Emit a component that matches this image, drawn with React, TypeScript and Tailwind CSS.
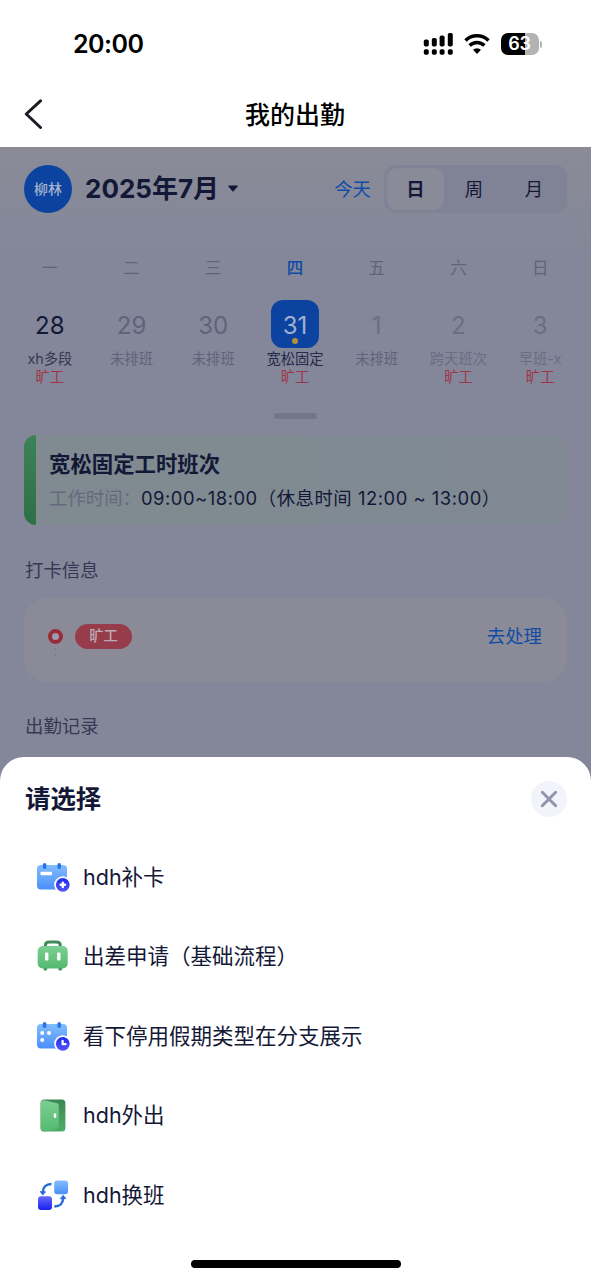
import React, { useState } from 'react';

interface DayItem {
  week: string;
  day: string;
  shift: string;
  absent?: boolean;
  dayClass: string;
  shiftClass: string;
}

const days: DayItem[] = [
  { week: '一', day: '28', shift: 'xh多段', absent: true, dayClass: 'text-[#141837]', shiftClass: 'text-[#353955]' },
  { week: '二', day: '29', shift: '未排班', dayClass: 'text-[#60637b]', shiftClass: 'text-[#60637b]' },
  { week: '三', day: '30', shift: '未排班', dayClass: 'text-[#60637b]', shiftClass: 'text-[#60637b]' },
  { week: '四', day: '31', shift: '宽松固定', absent: true, dayClass: 'text-[#a3b0cf]', shiftClass: 'text-[#24294a]' },
  { week: '五', day: '1', shift: '未排班', dayClass: 'text-[#6a6d84]', shiftClass: 'text-[#60637b]' },
  { week: '六', day: '2', shift: '跨天班次', absent: true, dayClass: 'text-[#6a6d84]', shiftClass: 'text-[#6a6d84]' },
  { week: '日', day: '3', shift: '早班-x', absent: true, dayClass: 'text-[#6a6d84]', shiftClass: 'text-[#6a6d84]' },
];

const CardIcon = () => (
  <svg width="38" height="38" viewBox="0 0 38 38" fill="none">
    <defs>
      <linearGradient id="calBody" x1="0" y1="0" x2="0" y2="1">
        <stop stopColor="#82bdfd" />
        <stop offset="1" stopColor="#4a8ffb" />
      </linearGradient>
      <linearGradient id="calBadge" x1="0" y1="0" x2="0" y2="1">
        <stop stopColor="#1a2bf0" />
        <stop offset="1" stopColor="#5656f6" />
      </linearGradient>
    </defs>
    <rect x="3" y="7" width="30" height="24.5" rx="4" fill="url(#calBody)" />
    <rect x="8.8" y="5" width="3.6" height="6" rx="1.8" fill="#2674e8" />
    <rect x="23.4" y="5" width="3.6" height="6" rx="1.8" fill="#2674e8" />
    <rect x="6.5" y="13.8" width="11.5" height="3.4" rx="1" fill="#fff" />
    <circle cx="28.8" cy="26.8" r="8.6" fill="#fff" />
    <circle cx="28.8" cy="26.8" r="6.9" fill="url(#calBadge)" />
    <path d="M28.8 24.6v4.4M26.6 26.8h4.4" stroke="#fff" strokeWidth="2.4" strokeLinecap="round" />
  </svg>
);

const TripIcon = () => (
  <svg width="38" height="38" viewBox="0 0 38 38" fill="none">
    <defs>
      <linearGradient id="bagBody" x1="0" y1="0" x2="0" y2="1">
        <stop stopColor="#7bd092" />
        <stop offset="1" stopColor="#55b970" />
      </linearGradient>
    </defs>
    <path d="M11.3 10V8.5c0-2.2 1.7-3.6 4-3.6h7c2.3 0 4 1.4 4 3.6V10" stroke="#418a5b" strokeWidth="3" />
    <rect x="9.6" y="28" width="3.6" height="5.4" rx="1.5" fill="#418a5b" />
    <rect x="24.4" y="28" width="3.6" height="5.4" rx="1.5" fill="#418a5b" />
    <rect x="3.7" y="9" width="30" height="22.4" rx="5" fill="url(#bagBody)" />
    <rect x="11" y="15.5" width="3.4" height="8" rx="1.2" fill="#fff" />
    <rect x="23.1" y="15.5" width="3.4" height="8" rx="1.2" fill="#fff" />
  </svg>
);

const LeaveIcon = () => (
  <svg width="38" height="38" viewBox="0 0 38 38" fill="none">
    <rect x="3" y="7" width="30" height="24.5" rx="4" fill="url(#calBody)" />
    <rect x="8.8" y="5" width="3.6" height="6" rx="1.8" fill="#2674e8" />
    <rect x="23.4" y="5" width="3.6" height="6" rx="1.8" fill="#2674e8" />
    <circle cx="8.2" cy="16" r="2" fill="#fff" />
    <circle cx="15" cy="16" r="2" fill="#fff" />
    <circle cx="8.2" cy="23" r="2" fill="#fff" />
    <circle cx="28.8" cy="26.8" r="8.6" fill="#fff" />
    <circle cx="28.8" cy="26.8" r="6.9" fill="url(#calBadge)" />
    <path d="M28.6 23.8v3.4h3" stroke="#fff" strokeWidth="2.2" strokeLinecap="round" strokeLinejoin="round" />
  </svg>
);

const DoorIcon = () => (
  <svg width="38" height="38" viewBox="0 0 38 38" fill="none">
    <defs>
      <linearGradient id="doorFrame" x1="0" y1="0" x2="0" y2="1">
        <stop stopColor="#3f8557" />
        <stop offset="1" stopColor="#4dae67" />
      </linearGradient>
    </defs>
    <rect x="6.6" y="2.6" width="24.8" height="32" rx="3.5" fill="url(#doorFrame)" />
    <path
      d="M6.6 6.2c0-2 1.6-3.3 3.5-2.9l12.3 2.6c1.4.3 2.4 1.3 2.4 2.8v20.6c0 1.4-.9 2.4-2.2 2.7l-11.8 2.4c-2.3.5-4.2-1-4.2-3.2z"
      fill="url(#bagBody)"
    />
    <rect x="19.8" y="16.2" width="2.4" height="4.8" rx="1.2" fill="#fff" />
  </svg>
);

const SwapIcon = () => (
  <svg width="38" height="38" viewBox="0 0 38 38" fill="none">
    <defs>
      <linearGradient id="swapDark" x1="0" y1="0" x2="0" y2="1">
        <stop stopColor="#6868f8" />
        <stop offset="1" stopColor="#1722f2" />
      </linearGradient>
    </defs>
    <rect x="20.2" y="4.6" width="13.8" height="13.6" rx="3" fill="url(#calBody)" />
    <rect x="4" y="20.2" width="14" height="13.8" rx="3" fill="url(#swapDark)" />
    <path d="M17.5 8c-5.2 0-8.7 3-8.7 8.4" stroke="#2868da" strokeWidth="2.4" />
    <path d="M6.2 15.6l5.4.2-2.9 3.3z" fill="#2868da" stroke="#2868da" strokeWidth=".8" strokeLinejoin="round" />
    <path d="M20.3 30.5c5.4 0 8.8-3 8.8-8.2" stroke="#2868da" strokeWidth="2.4" />
    <path d="M26.3 22.7l5.6-.1-2.8-3.3z" fill="#2868da" stroke="#2868da" strokeWidth=".8" strokeLinejoin="round" />
  </svg>
);

const options = [
  { label: 'hdh补卡', icon: <CardIcon /> },
  { label: '出差申请（基础流程）', icon: <TripIcon /> },
  { label: '看下停用假期类型在分支展示', icon: <LeaveIcon /> },
  { label: 'hdh外出', icon: <DoorIcon /> },
  { label: 'hdh换班', icon: <SwapIcon /> },
];

const StatusBar = () => (
  <div className="flex h-[88px] items-center justify-between pr-[49px] pl-[73px]">
    <span className="pt-[2px] text-[25px] font-semibold tracking-[-0.5px] text-black">20:00</span>
    <div className="flex items-center">
      <svg width="31" height="24" viewBox="0 0 31 24" fill="#000">
        <rect x="0.8" y="7.5" width="5" height="7" rx="1.8" />
        <rect x="8.8" y="6" width="5" height="8.5" rx="1.8" />
        <rect x="16.6" y="3.5" width="5" height="11" rx="1.8" />
        <rect x="24.8" y="1" width="5" height="13.5" rx="1.8" />
        <rect x="0.8" y="17.2" width="5" height="5.5" rx="1.8" />
        <rect x="8.8" y="17.2" width="5" height="5.5" rx="1.8" />
        <rect x="16.6" y="17.2" width="5" height="5.5" rx="1.8" />
        <rect x="24.8" y="17.2" width="5" height="5.5" rx="1.8" />
      </svg>
      <svg className="ml-[10px]" width="26" height="22" viewBox="0 0 26 22" fill="none" stroke="#000" strokeWidth="3.5">
        <path d="M1.5 7.5a16.5 16.5 0 0 1 23 0" />
        <path d="M5.6 12.5a10.6 10.6 0 0 1 14.800 0" />
        <path d="M9 16.8a5.8 5.8 0 0 1 8 0L13 21z" fill="#000" stroke="none" />
      </svg>
      <div className="ml-[11px] flex items-center">
        <div className="flex h-[22px] w-[38px] items-center justify-center rounded-[7px] bg-linear-to-r from-black from-63% to-[#b3b3b3] to-63%">
          <span className="pr-px text-[18px] leading-none font-semibold tracking-[-0.3px] text-white">63</span>
        </div>
        <span className="ml-[1px] h-[7px] w-[2px] rounded-r-full bg-[#b3b3b3]"></span>
      </div>
    </div>
  </div>
);

const App: React.FC = () => {
  const [view, setView] = useState('日');

  return (
    <div className="relative flex h-[1280px] w-[591px] flex-col overflow-hidden bg-white font-['Inter','Noto_Sans_CJK_SC',sans-serif]">
      <StatusBar />

      <div className="grid h-[59px] grid-cols-[60px_1fr_60px] items-center">
        <button className="pb-[7px] pl-[24px]">
          <svg width="20" height="30" viewBox="0 0 20 30" fill="none">
            <path d="M16.5 1.8L2.3 15l14.2 13.5" stroke="#1a1c24" strokeWidth="3" strokeLinecap="round" strokeLinejoin="round" />
          </svg>
        </button>
        <h1 className="pr-px pb-[5px] text-center text-[25px] leading-none font-medium text-black">我的出勤</h1>
      </div>

      <div className="h-[660px] bg-linear-to-b from-[#8a8b97] to-[#838799] to-[110px]">
        <div className="flex h-[66px] items-end px-6">
          <div className="flex h-12 w-12 items-center justify-center rounded-full bg-[#0c43a0] pb-px text-[14px] font-medium text-[#a5b2cd]">
            柳林
          </div>
          <div className="ml-[13px] flex h-12 items-center">
            <span className="text-[26px] leading-none font-bold whitespace-nowrap text-[#141837]">2025年7月</span>
            <svg className="ml-[8px]" width="12" height="8" viewBox="0 0 12 8">
              <path d="M1.5 1h9L6 6.3z" fill="#141837" stroke="#141837" strokeWidth="1" strokeLinejoin="round" />
            </svg>
          </div>
          <div className="ml-auto flex h-12 items-center">
            <span className="mr-[13px] pt-px text-[18.4px] text-[#124aa6]">今天</span>
            <div className="flex h-12 w-[183px] items-center rounded-[12px] bg-[#808396] p-[3px]">
              {['日', '周', '月'].map((item) => (
                <button
                  key={item}
                  onClick={() => setView(item)}
                  className={`h-[42px] rounded-[10px] pt-px text-[18.4px] text-[#141837] ${item === '日' ? 'w-[57px]' : 'w-[60px]'} ${
                    view === item ? 'bg-[#898b99] font-bold' : ''
                  }`}
                >
                  {item}
                </button>
              ))}
            </div>
          </div>
        </div>

        <div className="grid grid-cols-7 pt-[41px] pr-[10px] pl-[9px]">
          {days.map((item) => {
            const selected = item.day === '31';
            return (
              <div key={item.day} className="flex flex-col items-center whitespace-nowrap">
                <span className={`text-[16.5px] leading-[28px] ${selected ? 'font-medium text-[#124aa6]' : 'text-[#60637b]'}`}>
                  {item.week}
                </span>
                <div
                  className={`relative mt-[18px] flex h-12 w-12 items-center justify-center rounded-[12px] pt-[3px] text-[24px] ${item.dayClass} ${
                    selected ? 'bg-[#0c43a0]' : ''
                  }`}
                >
                  {item.day}
                  {selected && <span className="absolute bottom-[4px] left-[21px] h-[6px] w-[6px] rounded-full bg-[#b29039]"></span>}
                </div>
                <span className={`mt-[2px] text-[14.3px] leading-[18px] ${item.shiftClass}`}>{item.shift}</span>
                <span className="h-[18px] text-[14.3px] leading-[18px] text-[#a03548]">{item.absent ? '旷工' : ''}</span>
              </div>
            );
          })}
        </div>

        <div className="mx-auto mt-[27px] h-[6px] w-[43px] rounded-full bg-[#73768b]"></div>

        <div className="mx-6 mt-[16px] flex h-[90px] overflow-hidden rounded-[12px] bg-linear-to-r from-[#7f8b90] to-[#808993]">
          <div className="w-[12px] bg-linear-to-b from-[#3d8158] to-[#2d7048]"></div>
          <div className="flex flex-col pt-[14px] pl-[13px] whitespace-nowrap">
            <h2 className="text-[21.4px] leading-[30px] font-bold text-[#141837]">宽松固定工时班次</h2>
            <p className="mt-[5px] text-[18.4px] leading-[28px] text-[#141837]">
              <span className="text-[#66697e]">工作时间：</span>
              <span className="tracking-[0.52px]">09:00~18:00（休息时间 12:00 ~ 13:00）</span>
            </p>
          </div>
        </div>

        <h3 className="mt-[31px] px-[25px] text-[18.4px] leading-[28px] text-[#353955]">打卡信息</h3>
        <div className="mx-6 mt-[14px] flex h-[84px] items-start justify-between rounded-[24px] bg-[#8a8b97] pt-[26px] pr-[25px] pl-6">
          <div className="flex">
            <div className="flex w-[15px] flex-col items-center pt-[5px]">
              <span className="h-[15px] w-[15px] rounded-full border-[4.5px] border-[#972c3b] bg-[#9b9cac]"></span>
              <span className="mt-[4px] h-[3px] w-px bg-[#737e98]"></span>
              <span className="mt-[3px] h-[3px] w-px bg-[#737e98]"></span>
            </div>
            <span className="ml-[12px] flex h-[25px] w-[57px] items-center justify-center rounded-full bg-[#963c4b] pb-px text-[14.3px] font-medium text-[#bdaab5]">
              旷工
            </span>
          </div>
          <button className="text-[18.4px] leading-[25px] text-[#124aa6]">去处理</button>
        </div>
        <h3 className="mt-[30px] px-[25px] text-[18.4px] leading-[28px] text-[#353955]">出勤记录</h3>
      </div>

      {/* bottom sheet */}
      <div className="absolute inset-x-0 bottom-0 h-[523px] rounded-t-[24px] bg-white">
        <div className="flex h-[84px] items-center justify-between pr-6 pl-[25px]">
          <h2 className="text-[25.4px] font-bold text-[#141837]">请选择</h2>
          <button className="flex h-[36px] w-[36px] items-center justify-center rounded-full bg-[#f3f4fb]">
            <svg width="18" height="18" viewBox="0 0 18 18" fill="none">
              <path d="M2.3 2.3l13.4 13.4M15.7 2.3L2.3 15.7" stroke="#9194af" strokeWidth="3" strokeLinecap="round" />
            </svg>
          </button>
        </div>
        <ul className="-mt-[4px]">
          {options.map((option) => (
            <li key={option.label} className="flex h-[79.6px] items-center pl-[34px]">
              {option.icon}
              <span className="ml-[11px] text-[21.5px] text-[#141837]">{option.label}</span>
            </li>
          ))}
        </ul>
        <div className="mx-auto mt-[25px] h-[8px] w-[210px] rounded-full bg-black"></div>
      </div>
    </div>
  );
};

export default App;
